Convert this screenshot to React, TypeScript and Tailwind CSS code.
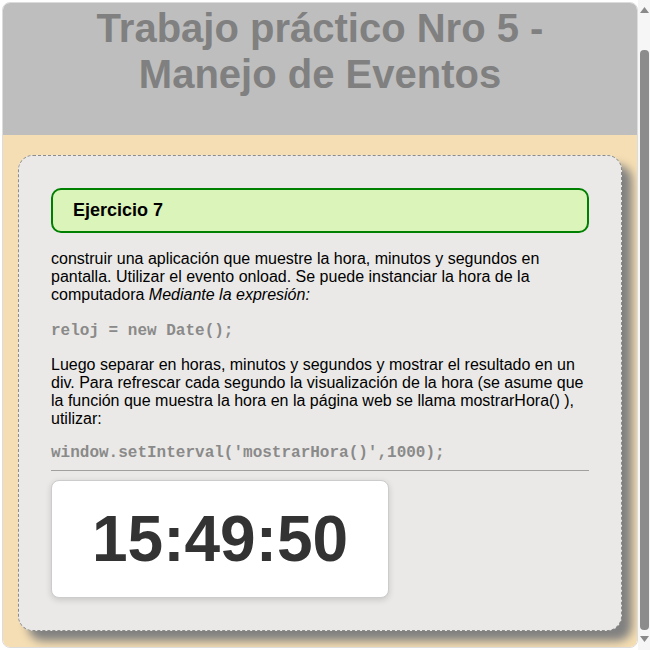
const sans = "font-['Liberation_Sans',Arial,sans-serif]";
const mono = "font-['Liberation_Mono','Courier_New',monospace]";

function Scrollbar() {
  return (
    <div className="flex h-[650px] w-[12px] flex-col items-center bg-[#f6f6f6]">
      <svg width="9" height="6" viewBox="0 0 9 6" className="mt-[7px]">
        <path d="M0 6 L4.5 0 L9 6 Z" fill="#8a8a8a" />
      </svg>
      <div className="mt-[37px] h-[580px] w-[9px] rounded-[4px] bg-[#8c8c8c]" />
      <svg width="9" height="6" viewBox="0 0 9 6" className="mt-[6px]">
        <path d="M0 0 L4.5 6 L9 0 Z" fill="#8a8a8a" />
      </svg>
    </div>
  );
}

export default function App() {
  return (
    <div className={`${sans} flex h-[650px] w-[650px] overflow-hidden bg-white`}>
      <div className="h-[650px] w-[638px] shrink-0 pl-[2px] pt-[2px]">
        <div className="overflow-hidden rounded-[8px] border border-[#dcdcdc]">
          <header className="bg-[#bebebe] pt-[2px] pb-[38px]">
            <h1 className="text-center text-[40px] font-bold leading-[46px] text-[#808080]">
              Trabajo práctico Nro 5 -<br />
              Manejo de Eventos
            </h1>
          </header>
          <main className="bg-[#f5deb3] px-[15px] pt-[20px] pb-[16px]">
            <section className="rounded-[15px] border border-dashed border-[#8c8c8c] bg-[#eae9e7] p-[32px] shadow-[10px_10px_10px_#808080]">
              <div className="rounded-[10px] border-2 border-[#008000] bg-[#dbf4b9] px-[20px] pt-[10px] pb-[10px]">
                <h2 className="text-[18px] font-bold leading-[21px] text-black">Ejercicio 7</h2>
              </div>
              <p className="mt-[17px] text-[16px] leading-[18px] text-black">
                construir una aplicación que muestre la hora, minutos y segundos en pantalla. Utilizar el evento onload. Se puede instanciar la hora de la computadora <em>Mediante la expresión:</em>
              </p>
              <pre className={`${mono} mt-[18px] text-[16px] font-bold leading-[18px] text-[#8a8a8a]`}>reloj = new Date();</pre>
              <p className="mt-[16px] text-[16px] leading-[18px] text-black">
                Luego separar en horas, minutos y segundos y mostrar el resultado en un div. Para refrescar cada segundo la visualización de la hora (se asume que la función que muestra la hora en la página web se llama mostrarHora() ), utilizar:
              </p>
              <pre className={`${mono} mt-[16px] text-[16px] font-bold leading-[18px] text-[#8a8a8a]`}>window.setInterval('mostrarHora()',1000);</pre>
              <hr className="mt-[8px] border-t border-[#a0a0a0]" />
              <div className="mt-[9px] inline-block rounded-[8px] border border-[#cccccc] bg-white px-[40px] py-[21px] shadow-[0_2px_6px_rgba(0,0,0,0.15)]">
                <div className="text-[64px] font-bold leading-[74px] text-[#333333]">15:49:50</div>
              </div>
            </section>
          </main>
        </div>
      </div>
      <Scrollbar />
    </div>
  );
}
